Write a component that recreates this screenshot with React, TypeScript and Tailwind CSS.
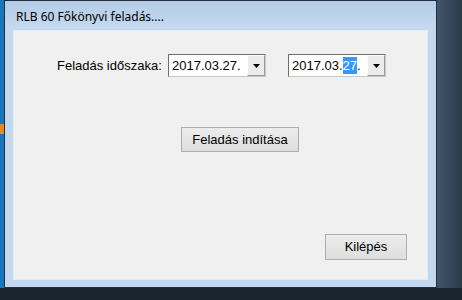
import React from 'react';

function Combo({ highlight }: { highlight?: boolean }) {
  return (
    <div className="flex h-[23px] w-[98px] border border-t-[#6e6e6e] border-l-[#6e6e6e] border-r-[#c8c8c8] border-b-[#c8c8c8] bg-white">
      <div className="flex flex-1 items-center pl-[3px] text-[13px] leading-none text-black">
        {highlight ? (
          <>
            <span>2017.03.</span>
            <span className="bg-[#3399ff] py-[2px] text-white">27</span>
            <span>.</span>
          </>
        ) : (
          <span>2017.03.27.</span>
        )}
      </div>
      <div className="flex w-[18px] items-center justify-center border border-t-white border-l-white border-r-[#9a9a9a] border-b-[#9a9a9a] bg-[#ececec]">
        <svg width="7" height="4" viewBox="0 0 7 4">
          <path d="M0 0h7L3.5 4z" fill="#000" />
        </svg>
      </div>
    </div>
  );
}

function Btn({ label, className }: { label: string; className: string }) {
  return (
    <div
      className={
        'flex items-center justify-center border border-[#adadad] bg-gradient-to-b from-[#ececec] to-[#dedede] text-[13px] text-black ' +
        className
      }
    >
      {label}
    </div>
  );
}

export default function App() {
  return (
    <div
      className="flex h-[300px] w-[462px] flex-col overflow-hidden bg-[#1c2631]"
      style={{ fontFamily: '"Liberation Sans", Arial, sans-serif' }}
    >
      <div className="flex h-[288px]">
        {/* desktop strip on the left */}
        <div className="flex w-[4px] flex-col bg-[#1677bb]">
          <div className="h-[124px]" />
          <div className="h-[10px] bg-[#e08a2a]" />
        </div>

        {/* window */}
        <div className="flex w-[433px] flex-col rounded-t-[6px] border border-[#22303d] bg-[#c3d8ee]">
          <div className="flex h-[29px] items-center bg-gradient-to-b from-[#b3cce7] to-[#c6daef] pl-[11px] pt-[2px] text-[12px] text-black" style={{ fontFamily: '"Noto Sans", sans-serif' }}>
            RLB 60 Főkönyvi feladás....
          </div>
          <div className="flex flex-1 px-[8px] pb-[7px]">
            <div className="flex flex-1 flex-col border border-[#e3ebf4] bg-[#f0f0f0]">
              <div className="mt-[23px] flex items-center">
                <span className="ml-[43px] w-[111px] text-[13px] text-black">Feladás időszaka:</span>
                <Combo />
                <div className="w-[22px]" />
                <Combo highlight />
              </div>
              <Btn label="Feladás indítása" className="ml-[167px] mt-[50px] h-[25px] w-[118px]" />
              <Btn label="Kilépés" className="ml-[311px] mt-[82px] h-[26px] w-[82px]" />
            </div>
          </div>
        </div>

        {/* desktop on the right */}
        <div className="flex flex-1 bg-gradient-to-r from-[#41566b] to-[#2b3a49]" />
      </div>
      <div className="flex-1 bg-[#1b2530]" />
    </div>
  );
}
